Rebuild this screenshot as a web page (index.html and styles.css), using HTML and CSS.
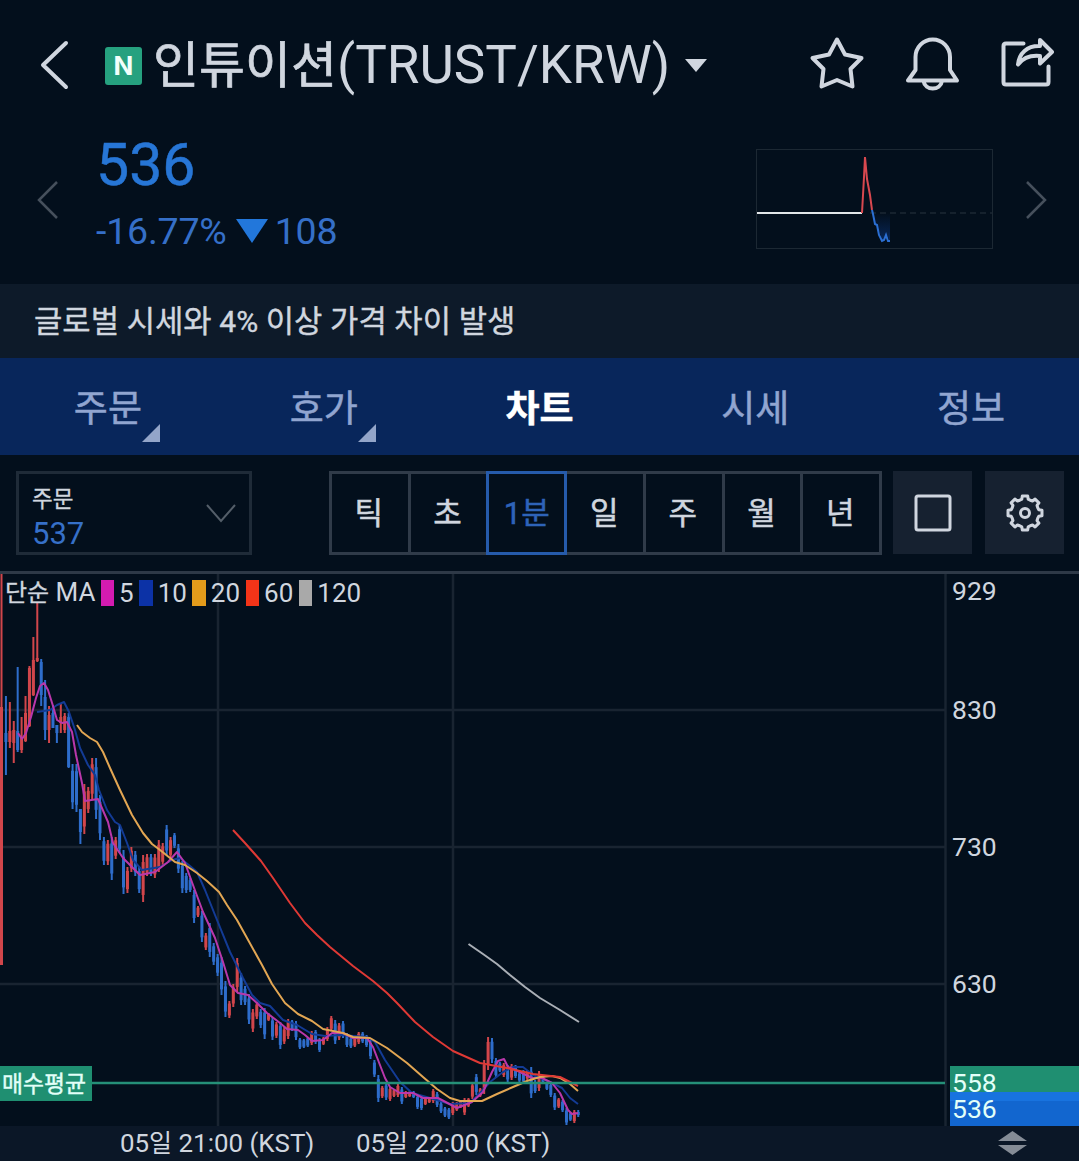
FILE: index.html
```html
<!DOCTYPE html>
<html lang="ko">
<head>
    <meta charset="UTF-8">
    <title>인튜이션(TRUST/KRW)</title>
    <link rel="stylesheet" href="styles.css">
</head>

<body>
<header class="top">
    <div class="title-bar">
        <svg class="back" width="32" height="54" viewBox="0 0 32 54"><path d="M28 4 5 26 28 48"/></svg>
        <span class="badge">N</span>
        <h1 class="title"><span class="ko">인튜이션</span>(TRUST/KRW)</h1>
        <svg class="caret" width="22" height="13" viewBox="0 0 22 13"><path d="M0 0h22L11 13z"/></svg>
        <div class="actions">
            <svg width="56" height="56" viewBox="0 0 56 56"><path d="M28 4.500 36 19.500 52.500 23 41.500 34 43.500 51.500 28 45 12.500 51.500 14.500 34 3.500 23 20 19.500z"/></svg>
            <svg width="56" height="56" viewBox="0 0 56 56"><path d="M11.500 35V22a17.200 17.500 0 0 1 34.500 0v13l7 10.500H4zM19.500 46c1.500 10 17 10 18.500 0"/></svg>
            <svg width="56" height="56" viewBox="0 0 56 56"><path d="M24.500 8.500H7q-2.500 0-2.500 2.500v36q0 2.500 2.500 2.500h40q2.500 0 2.500-2.500V31.500M19 29.500c1-11 9-19 22-18.500V5l12 12-12 11.500v-7.500c-10-1-17 2-22 8.500z"/></svg>
        </div>
    </div>
    <div class="quote">
        <svg class="arrow" width="22" height="40" viewBox="0 0 22 40"><path d="M20 2 2 20 20 38"/></svg>
        <div class="price-box">
            <div class="price">536</div>
            <div class="change">-16.77%<svg width="32" height="24" viewBox="0 0 32 24"><path d="M0 0h32L16 24z"/></svg>108</div>
        </div>
        <svg class="mini" width="238" height="101" viewBox="0 0 238 101">
            <defs>
                <linearGradient id="miniFill" x1="0" y1="0" x2="0" y2="1">
                    <stop offset="0" stop-color="#0b3479" stop-opacity="0"/>
                    <stop offset="1" stop-color="#0b3479" stop-opacity=".65"/>
                </linearGradient>
            </defs>
            <rect class="mini-frame" x=".5" y=".5" width="236" height="99"/>
            <path class="mini-base" d="M114 64H236"/>
            <path fill="url(#miniFill)" d="M116 64 119 76 122 78 126 91 129 91 131 86 134 92V64z"/>
            <path class="mini-flat" d="M1 64H106"/>
            <path class="mini-up" d="M106 64 108 28 109 8 111 30 114 46 116 61"/>
            <path class="mini-down" d="M116 61 117 65 119 75 121 76 123 86 126 92 128 91 130 86 132 92 134 92"/>
        </svg>
        <svg class="arrow" width="22" height="40" viewBox="0 0 22 40"><path d="M2 2 20 20 2 38"/></svg>
    </div>
</header>
<div class="notice">글로벌 시세와 <span>4%</span> 이상 가격 차이 발생</div>
<nav class="tabs">
    <a class="tab more">주문</a>
    <a class="tab more">호가</a>
    <a class="tab active">차트</a>
    <a class="tab">시세</a>
    <a class="tab">정보</a>
</nav>
<div class="toolbar">
    <div class="order">
        <div>
            <div class="order-label">주문</div>
            <div class="order-price">537</div>
        </div>
        <svg width="30" height="19" viewBox="0 0 30 19"><path d="M1 1 15 17 29 1"/></svg>
    </div>
    <div class="periods">
        <a>틱</a>
        <a>초</a>
        <a class="on"><span>1</span>분</a>
        <a>일</a>
        <a>주</a>
        <a>월</a>
        <a>년</a>
    </div>
    <div class="tool">
        <svg width="40" height="40" viewBox="0 0 40 40"><rect x="3" y="3" width="34" height="34" rx="2"/></svg>
    </div>
    <div class="tool">
        <svg width="40" height="40" viewBox="-20 -20 40 40"><path id="gear"/><circle r="4.500"/></svg>
    </div>
</div>
<div class="chart">
    <svg width="1079" height="590" viewBox="0 571 1079 590">
        <rect class="axis-band" x="0" y="1126" width="1079" height="35"/>
        <path class="grid" d="M0 710H945M0 847H945M0 984H945M218 574V1126M453 574V1126M945.500 574V1126"/>
        <path class="top-line" d="M0 572.500H1079"/>
        <g id="candles"></g>
        <path class="ma ma10" d="M37 712 50 710 57 705 64 702 69 712 75 730 80 748 88 765 95 775 99 790 107 810 115 822 120 825 127 843 133 860 142 870 160 867 172 860 180 858 190 866 197 872 205 890 215 915 230 952 243 978 252 995 260 1003 270 1006 283 1020 297 1025 312 1034 325 1036 340 1035 367 1037 375 1042 385 1060 400 1082 412 1093 430 1098 450 1104 470 1103 480 1093 490 1082 503 1072 513 1067 523 1067 533 1075 550 1082 562 1088 570 1098 578 1104"/>
        <path class="ma ma5" d="M18 733 22 739 26 733 31 717 36 698 40 686 44 683 48 690 53 706 57 720 62 723 67 722 72 732 76 755 82 783 85 801 98 799 108 822 113 843 123 858 132 867 140 875 155 872 168 862 177 852 185 863 193 885 203 912 215 938 223 962 230 985 238 993 248 995 257 1003 267 1013 280 1023 287 1029 298 1030 305 1035 312 1041 323 1040 332 1033 343 1033 353 1038 367 1038 373 1047 385 1078 390 1087 400 1093 413 1093 423 1098 438 1098 457 1108 472 1102 483 1092 492 1072 498 1061 504 1059 508 1067 520 1072 532 1078 542 1078 552 1083 560 1093 568 1110 572 1114 578 1113"/>
        <path class="ma ma20" d="M77 725 82 732 90 738 97 742 103 752 110 768 120 790 132 815 143 833 152 844 160 850 170 858 175 862 185 865 197 873 207 881 219 892 227 905 237 920 247 938 262 965 272 984 285 1003 298 1014 312 1021 323 1029 333 1031 343 1033 353 1037 370 1038 387 1048 407 1063 423 1077 437 1089 450 1098 460 1101 482 1101 497 1094 513 1087 527 1081 540 1077 552 1076 560 1078 570 1084 578 1091"/>
        <path class="ma ma60" d="M233 830 245 843 261 861 273 878 290 903 305 923 317 935 330 947 353 966 373 981 387 993 397 1003 415 1022 433 1037 453 1051 480 1063 507 1068 533 1074 560 1077 578 1086"/>
        <path class="ma ma120" d="M468.500 944 483 954 497 964 510 975 525 987 540 998 560 1010 579 1022"/>
        <path class="avg-line" d="M92 1083H945"/>
        <rect class="green" x="0" y="1066" width="92" height="35"/>
        <text class="avg" x="2" y="1092">매수평균</text>
        <g class="label">
            <text x="952" y="600">929</text>
            <text x="952" y="719">830</text>
            <text x="952" y="856">730</text>
            <text x="952" y="993">630</text>
        </g>
        <g class="label time">
            <text x="120" y="1152">05<tspan class="ko">일</tspan> 21:00 (KST)</text>
            <text x="356" y="1152">05<tspan class="ko">일</tspan> 22:00 (KST)</text>
        </g>
        <rect class="green" x="950" y="1066" width="129" height="27"/>
        <rect class="blue-top" x="950" y="1092" width="129" height="9"/>
        <rect class="blue" x="950" y="1101" width="129" height="25"/>
        <g class="label tag">
            <text x="952" y="1092">558</text>
            <text x="952" y="1117.500">536</text>
        </g>
        <path class="handle" d="M998 1141 1012.500 1131 1027 1141zM998 1145H1027L1012.500 1155z"/>
    </svg>
    <div class="legend">
        <span class="legend-title"><span class="ko">단순</span> MA</span>
        <i class="c5"></i><span>5</span>
        <i class="c10"></i><span>10</span>
        <i class="c20"></i><span>20</span>
        <i class="c60"></i><span>60</span>
        <i class="c120"></i><span>120</span>
    </div>
</div>
<script src="chart.js"></script>
</body>

</html>
```
FILE: styles.css
```css
*{
    box-sizing: border-box;
}
body{
    margin: 0;
    width: 1079px;
    height: 1161px;
    overflow: hidden;
    background: #030f1c;
    color: #d0d6df;
    font-family: Roboto, "Noto Sans CJK KR", sans-serif;
}
svg{
    display: block;
    flex: none;
    fill: none;
}
.top{
    height: 284px;
}
.title-bar{
    height: 131px;
    padding: 0 20px 0 38px;
    display: flex;
    align-items: center;
}
.back{
    stroke: #d0d6df;
    stroke-width: 4;
    stroke-linecap: round;
    stroke-linejoin: round;
}
.badge{
    width: 37px;
    height: 38px;
    margin-left: 35px;
    border-radius: 3px;
    background: #26a17f;
    color: #f2fffb;
    font: 700 26px/38px Inter, sans-serif;
    text-align: center;
}
.title{
    margin: 0 0 0 11px;
    width: 523px;
    font-size: 53px;
    font-weight: 400;
    line-height: 70px;
    white-space: nowrap;
}
.title .ko{
    font-size: 50px;
    -webkit-text-stroke: .7px;
}
.caret{
    margin-left: 9px;
    margin-right: 102px;
    fill: #d0d6df;
}
.actions{
    display: flex;
    gap: 39px;
    margin-bottom: 6px;
    stroke: #d0d6df;
    stroke-width: 4;
    stroke-linejoin: round;
    stroke-linecap: round;
}
.quote{
    height: 153px;
    padding: 0 32px 0 37px;
    display: flex;
}
.arrow{
    margin-top: 49px;
    stroke: #46505c;
    stroke-width: 2.5;
}
.price-box{
    width: 300px;
    margin-left: 37px;
    color: #2776d6;
}
.price{
    margin-top: 1px;
    font-size: 59px;
    line-height: 66px;
    -webkit-text-stroke: .5px;
}
.change{
    display: flex;
    align-items: center;
    gap: 9px;
    margin-top: 9px;
    color: #356fc8;
    font-size: 37.5px;
    letter-spacing: -.2px;
    line-height: 48px;
}
.change svg{
    margin-right: -2px;
    fill: #2277db;
}
.mini{
    margin-left: auto;
    margin-right: 31px;
    margin-top: 18px;
}
.mini-frame{
    stroke: #1c2833;
}
.mini-base{
    stroke: #1c2833;
    stroke-width: 1.5;
    stroke-dasharray: 6 4;
}
.mini-flat{
    stroke: #e2e6e8;
    stroke-width: 2;
}
.mini-up{
    stroke: #d8484f;
    stroke-width: 2;
}
.mini-down{
    stroke: #2b6fd3;
    stroke-width: 2;
}
.notice{
    height: 74px;
    padding-left: 34px;
    background: #0d1a29;
    font-size: 30.8px;
    line-height: 75px;
    white-space: nowrap;
    -webkit-text-stroke: .4px;
}
.notice span{
    font-size: 30px;
}
.tabs{
    height: 97px;
    display: flex;
    background: #08265b;
}
.tab{
    position: relative;
    flex: 1;
    color: #91a5d0;
    font-size: 37px;
    line-height: 103px;
    text-align: center;
    -webkit-text-stroke: .5px;
}
.tab.active{
    color: #fff;
    font-weight: 700;
}
.more:after{
    content: '';
    position: absolute;
    right: 56px;
    bottom: 13px;
    border-left: 18px solid transparent;
    border-bottom: 18px solid #93a5c9;
}
.toolbar{
    height: 116px;
    padding: 16px 15px 0 16px;
    display: flex;
    align-items: flex-start;
}
.order{
    width: 236px;
    height: 84px;
    padding: 8px 13px 0 13px;
    border: 3px solid #1f2b38;
    display: flex;
    justify-content: space-between;
}
.order svg{
    margin-top: 22px;
    stroke: #545e69;
    stroke-width: 2;
}
.order-label{
    font-size: 22.5px;
    line-height: 35px;
    -webkit-text-stroke: .3px;
}
.order-price{
    font-size: 31px;
    line-height: 34px;
    color: #3670c8;
}
.periods{
    width: 553px;
    height: 84px;
    margin-left: 77px;
    border: 3px solid #303b49;
    display: flex;
}
.periods a{
    flex: 1;
    border-right: 3px solid #303b49;
    font-size: 31px;
    line-height: 80px;
    text-align: center;
    text-indent: -2px;
    -webkit-text-stroke: .5px;
}
.periods a:last-child{
    border-right: 0;
}
.periods .on{
    flex: none;
    width: 81px;
    margin: -3px 0 -3px -3px;
    border: 3px solid #265bab;
    color: #2e63b8;
    text-indent: 0;
}
.tool{
    width: 79px;
    height: 83px;
    margin-left: 11px;
    background: #162130;
    display: flex;
    align-items: center;
    justify-content: center;
    stroke: #d0d6df;
    stroke-width: 3;
    stroke-linejoin: round;
}
.tool+.tool{
    margin-left: 13px;
}
.chart{
    position: relative;
    height: 590px;
}
.axis-band{
    fill: #0b1727;
}
.grid{
    stroke: #192431;
    stroke-width: 2.5;
}
.top-line{
    stroke: #2e3947;
    stroke-width: 3;
}
.up{
    fill: #d1464b;
}
.down{
    fill: #2e6dcb;
}
.ma{
    stroke-width: 2;
    stroke-linejoin: round;
}
.ma5{
    stroke: #b937ab;
}
.ma10{
    stroke: #133b95;
}
.ma20{
    stroke: #e2a653;
}
.ma60{
    stroke: #df3935;
}
.ma120{
    stroke: #aaafb6;
}
.avg-line{
    stroke: #259078;
    stroke-width: 2.5;
}
.green{
    fill: #1f8f71;
}
.blue{
    fill: #1266cf;
}
.blue-top{
    fill: #1873df;
}
.label{
    fill: #d0d6df;
    font-size: 26.5px;
}
.time{
    font-size: 25.9px;
}
.label .ko{
    font-size: 25px;
}
.label.tag,
.avg{
    fill: #e2fff8;
}
.avg{
    font-size: 22.8px;
    stroke: #e2fff8;
    stroke-width: .4;
}
.handle{
    fill: #858c96;
}
.legend{
    position: absolute;
    left: 5px;
    top: 5px;
    display: flex;
    align-items: center;
    font-size: 26px;
    line-height: 32px;
}
.legend-title{
    width: 90px;
    white-space: nowrap;
}
.legend .ko{
    font-size: 24px;
    -webkit-text-stroke: .3px;
}
.legend i{
    width: 13.5px;
    height: 26px;
    margin: 0 5px 0 5.5px;
}
.legend .c5{
    background: #d41bb0;
}
.legend .c10{
    background: #0c32a6;
}
.legend .c20{
    background: #e39b1b;
}
.legend .c60{
    background: #f33418;
}
.legend .c120{
    background: #a9a9a9;
}
```
FILE: chart.js
```js
// one entry per minute: direction (r up, b down), high, low, [body top, body bottom]
var candles = [
    'r 574 965 707 965', 'b 696 775 733 742', 'r 702 748 731 742', 'r 721 763 730 743', 'b 667 752 731 750',
    'r 717 753 737 750', 'r 696 742 713 741', 'r 666 727 668 726', 'r 637 696 660 695', 'r 602 662 658 661',
    'b 659 706 662 695', 'b 680 740 697 730', 'r 706 743 715 730', 'b 705 728 713 728', 'b 725 743 725 733',
    'r 704 733 717 723', 'r 713 733', 'b 713 768 717 767', 'b 764 809', 'b 764 812',
    'b 809 844 809 832', 'r 784 834', 'r 787 813', 'r 758 800', 'b 758 819',
    'b 795 840', 'b 837 865', 'r 840 865', 'b 837 880', 'r 837 859',
    'b 825 853', 'b 850 894', 'r 867 893', 'r 847 872', 'b 851 876',
    'b 867 893', 'r 855 902', 'r 854 876', 'b 854 876', 'r 854 878',
    'r 840 872', 'r 843 865', 'b 825 855', 'r 837 858', 'b 833 848',
    'b 844 873', 'b 861 893', 'b 873 893', 'b 878 892', 'b 890 923',
    'r 906 917', 'b 911 942', 'r 933 950', 'b 923 957', 'b 943 965',
    'b 954 976', 'b 957 995', 'b 981 1017', 'r 1001 1018', 'r 984 1007',
    'r 958 992', 'b 973 1005', 'b 986 1005', 'b 994 1024', 'r 1009 1032',
    'r 1002 1019', 'b 1009 1028', 'b 1008 1039', 'r 1013 1021', 'b 1017 1040',
    'r 1022 1038', 'b 1022 1049', 'r 1027 1044', 'r 1019 1039', 'b 1020 1031',
    'b 1021 1040', 'b 1038 1049', 'b 1039 1048', 'b 1037 1047', 'r 1031 1045',
    'b 1030 1044', 'b 1038 1052', 'r 1037 1045', 'r 1027 1041', 'r 1016 1031',
    'b 1020 1044', 'r 1023 1040', 'b 1021 1038', 'b 1033 1047', 'b 1037 1048',
    'r 1037 1047', 'r 1032 1044', 'b 1032 1043', 'b 1035 1047', 'b 1040 1059',
    'b 1060 1077', 'b 1075 1102', 'r 1086 1098', 'b 1083 1100', 'r 1087 1101',
    'r 1089 1097', 'r 1084 1097', 'b 1087 1104', 'r 1091 1098', 'r 1091 1097',
    'b 1091 1098', 'b 1095 1109', 'b 1097 1110', 'r 1098 1105', 'r 1097 1103',
    'r 1089 1103', 'b 1092 1107', 'b 1102 1113', 'b 1107 1117', 'b 1108 1119',
    'r 1102 1115', 'r 1102 1111', 'r 1100 1108', 'r 1098 1115', 'r 1098 1107',
    'r 1083 1099', 'b 1074 1095', 'r 1088 1097', 'r 1060 1094', 'r 1037 1070',
    'b 1038 1063', 'b 1058 1078', 'b 1062 1072', 'r 1063 1077', 'b 1065 1082',
    'r 1064 1080', 'b 1065 1078', 'b 1072 1082', 'b 1070 1083', 'r 1070 1080',
    'b 1067 1098', 'b 1080 1093', 'r 1071 1091', 'b 1075 1083', 'b 1082 1090',
    'b 1083 1097', 'b 1093 1110', 'r 1098 1108', 'b 1100 1112', 'b 1108 1125',
    'b 1112 1121', 'r 1110 1123', 'b 1110 1117 1112 1115'
];
var step = 3.92;

function rect(cls, x, w, top, bottom) {
    return `<rect class="${cls}" x="${x - w / 2}" y="${top}" width="${w}" height="${bottom - top}"/>`;
}

document.getElementById('candles').innerHTML = candles.map(function(row, i) {
    var c = row.split(' ');
    var high = +c[1], low = +c[2];
    var pad = (low - high) * 0.15;
    var top = c[3] ? +c[3] : high + pad;
    var bottom = c[4] ? +c[4] : low - pad;
    var x = i ? 2 + i * step : 1.5;
    var cls = c[0] == 'r' ? 'up' : 'down';
    return rect(cls, x, 2, high, low) + rect(cls, x, 3, top, bottom);
}).join('');

// settings gear
var teeth = 8, d = '';
for (var i = 0; i < teeth; i++) {
    [[-0.5, 13.8], [-0.29, 14.2], [-0.2, 17.2], [0.2, 17.2], [0.29, 14.2]].forEach(function(p) {
        var a = (i + p[0]) * 2 * Math.PI / teeth;
        d += (d ? 'L' : 'M') + (p[1] * Math.sin(a)).toFixed(2) + ' ' + (-p[1] * Math.cos(a)).toFixed(2);
    });
}
document.getElementById('gear').setAttribute('d', d + 'z');
```
